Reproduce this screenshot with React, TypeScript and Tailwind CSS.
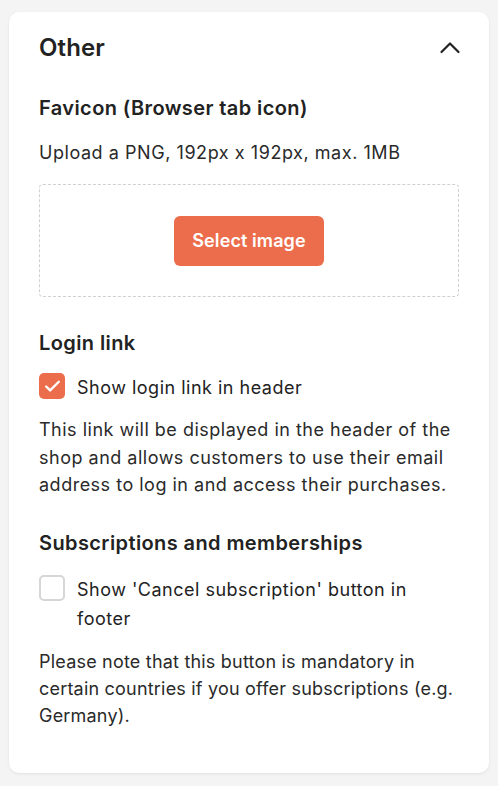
import { Check } from "lucide-react";

export default function App() {
  return (
    <div className="min-h-[786px] bg-[#f4f4f4] px-[9px] pt-[12px] pb-[12px] font-['Inter',sans-serif] text-[#222]">
      <div className="rounded-[10px] bg-white px-[30px] pt-[21px] pb-[44px] shadow-[0_1px_3px_rgba(0,0,0,0.08)]">
        {/* Header */}
        <div className="flex items-center justify-between">
          <h2 className="text-[24px] font-semibold leading-[30px] tracking-[0.1px]">Other</h2>
          <svg width="22" height="14" viewBox="0 0 22 14" className="mr-[-2px]" fill="none">
            <polyline points="2.5,11 11,2.5 19.5,11" stroke="#222" strokeWidth="2.2" strokeLinecap="round" strokeLinejoin="round" />
          </svg>
        </div>

        {/* Favicon */}
        <h3 className="mt-[32px] text-[20px] font-semibold leading-[26px] tracking-[0.4px]">Favicon (Browser tab icon)</h3>
        <p className="mt-[18px] text-[18px] leading-[27px] tracking-[0.55px] text-[#2a2a2a]">Upload a PNG, 192px x 192px, max. 1MB</p>
        <div className="mt-[18px] flex h-[113px] items-center justify-center rounded-[4px] border border-dashed border-[#d0d0d0]">
          <button className="h-[50px] w-[150px] rounded-[6px] bg-[#ec6d4b] text-[18px] font-semibold tracking-[0.1px] text-white">
            Select image
          </button>
        </div>

        {/* Login link */}
        <h3 className="mt-[33px] text-[20px] font-semibold leading-[26px] tracking-[0.4px]">Login link</h3>
        <label className="mt-[17px] flex items-start gap-[12px]">
          <span className="flex h-[26px] w-[26px] shrink-0 items-center justify-center rounded-[5px] bg-[#ec6d4b]">
            <Check className="h-[19px] w-[19px] text-white" strokeWidth={3} />
          </span>
          <span className="mt-[1px] text-[18px] leading-[28px] tracking-[0.5px] text-[#222]">Show login link in header</span>
        </label>
        <p className="mt-[14px] text-[18px] leading-[27.5px] tracking-[0.5px] text-[#2a2a2a]">
          This link will be displayed in the header of the shop and allows customers to use their email address to log in and access their purchases.
        </p>

        {/* Subscriptions */}
        <h3 className="mt-[31px] text-[20px] font-semibold leading-[26px] tracking-[0.4px]">Subscriptions and memberships</h3>
        <label className="mt-[19px] flex items-start gap-[12px]">
          <span className="h-[26px] w-[26px] shrink-0 rounded-[5px] border-2 border-[#d6d6d6] bg-white" />
          <span className="text-[18px] leading-[29px] tracking-[0.5px] text-[#222]">Show 'Cancel subscription' button in footer</span>
        </label>
        <p className="mt-[15px] text-[18px] leading-[27px] tracking-[0.2px] text-[#2a2a2a]">
          Please note that this button is mandatory in certain countries if you offer subscriptions (e.g. Germany).
        </p>
      </div>
    </div>
  );
}
